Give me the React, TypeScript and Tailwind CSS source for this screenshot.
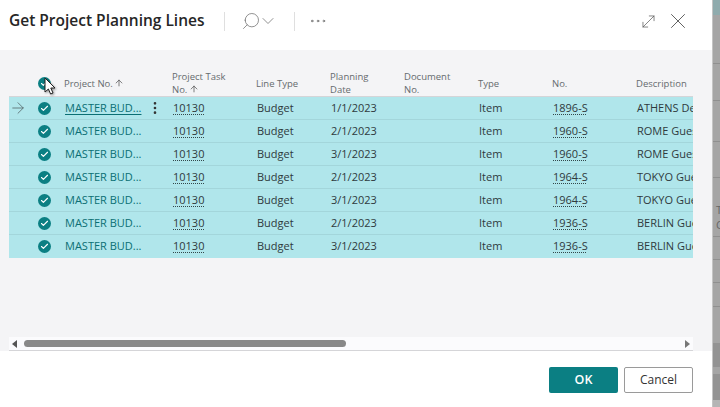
import { ArrowRight, ArrowUp, Check, ChevronDown, MoreHorizontal, MoreVertical, MoveDiagonal, Search, X } from 'lucide-react';

const rows = [
  { date: '1/1/2023', no: '1896-S', desc: 'ATHENS Desk' },
  { date: '2/1/2023', no: '1960-S', desc: 'ROME Guest' },
  { date: '3/1/2023', no: '1960-S', desc: 'ROME Guest' },
  { date: '2/1/2023', no: '1964-S', desc: 'TOKYO Guest' },
  { date: '3/1/2023', no: '1964-S', desc: 'TOKYO Guest' },
  { date: '2/1/2023', no: '1936-S', desc: 'BERLIN Guest' },
  { date: '3/1/2023', no: '1936-S', desc: 'BERLIN Guest' },
];

const grid = 'grid grid-cols-[29px_26px_108px_84px_74px_74px_74px_74px_84px_57px]';

function CheckDot() {
  return (
    <span className="flex size-[13px] items-center justify-center rounded-full bg-[#0b7f83] text-white">
      <Check className="size-[9px]" strokeWidth={3} />
    </span>
  );
}

function Dotted({ children }: { children: string }) {
  return <span className="underline decoration-dotted decoration-[#33474a] underline-offset-2">{children}</span>;
}

function SortArrow() {
  return <ArrowUp className="-ml-[1px] inline-block size-[10px] align-[-1px] text-[#555]" strokeWidth={1.8} />;
}

export default function App() {
  return (
    <div className="flex h-[407px] w-[720px] bg-white font-['Open_Sans','Noto_Sans',sans-serif] text-[11px] text-[#2f3a3d]">
      <div className="flex w-[712px] flex-col">
        <header className="flex h-[50px] shrink-0 items-center pb-[8px] pl-[9px] pr-[21px]">
          <h1 className="w-[215px] text-[15.5px] font-semibold text-[#262626]">Get Project Planning Lines</h1>
          <span className="h-[19px] w-px bg-[#dfdfdf]" />
          <div className="flex w-[69px] items-center justify-center text-[#6d6d6d]">
            <Search className="size-[20px] -scale-x-100" strokeWidth={0.9} />
            <ChevronDown className="-ml-[3px] size-[20px]" strokeWidth={0.9} />
          </div>
          <span className="h-[19px] w-px bg-[#dfdfdf]" />
          <MoreHorizontal className="ml-[13px] size-[20px] text-[#6d6d6d]" strokeWidth={1} />
          <div className="ml-auto flex items-center gap-[7px] text-[#555]">
            <MoveDiagonal className="size-[19px]" strokeWidth={0.9} />
            <X className="size-[26px]" strokeWidth={0.85} />
          </div>
        </header>

        <main className="flex h-[301px] shrink-0 flex-col bg-[#f4f4f6] pl-[9px] pr-[19px]">
          <div className={`${grid} relative h-[47px] shrink-0 items-center border-b border-[#d5d5d8] pt-[20px] text-[9.5px] leading-[13px] text-[#666b6e]`}>
            <span />
            <CheckDot />
            <span>Project No. <SortArrow /></span>
            <span>Project Task<br />No. <SortArrow /></span>
            <span>Line Type</span>
            <span>Planning<br />Date</span>
            <span>Document<br />No.</span>
            <span>Type</span>
            <span>No.</span>
            <span>Description</span>
            <svg className="absolute left-[35px] top-[27px] h-[19px] w-[13px] drop-shadow-[1px_1px_1px_rgba(0,0,0,0.4)]" viewBox="0 0 13 19">
              <path d="M1 1v14l3.4-3 2.2 5 2.4-1-2.2-5H11z" fill="#fff" stroke="#222" strokeWidth="1" strokeLinejoin="round" />
            </svg>
          </div>
          <div className="shrink-0 bg-[#b0e6eb]">
            {rows.map((row, i) => (
              <div key={i} className={`${grid} h-[23px] items-center border-b border-[#a3d6db] last:border-b-0`}>
                <span className="flex justify-start">{i === 0 && <ArrowRight className="size-[18px] text-[#4f5d60]" strokeWidth={1} />}</span>
                <CheckDot />
                <span className="flex items-center justify-between pl-[1px] pr-[9px] text-[#0b6f74]">
                  <span className={i === 0 ? 'underline underline-offset-2' : ''}>MASTER BUD...</span>
                  {i === 0 && <MoreVertical className="size-[16px] text-[#333]" strokeWidth={2} />}
                </span>
                <span className="pl-[1px]"><Dotted>10130</Dotted></span>
                <span className="pl-[1px]">Budget</span>
                <span className="pl-[1px]">{row.date}</span>
                <span />
                <span className="pl-[1px]">Item</span>
                <span className="pl-[1px]"><Dotted>{row.no}</Dotted></span>
                <span className="overflow-hidden whitespace-nowrap pl-[1px]">{row.desc}</span>
              </div>
            ))}
          </div>
          <div className="mt-auto flex h-[14px] shrink-0 items-center border-b border-[#d5d5d8] bg-[#fbfbfd] px-[3px]">
            <span className="h-0 w-0 border-y-[4px] border-r-[5px] border-y-transparent border-r-[#555]" />
            <span className="ml-[7px] h-[7px] w-[322px] rounded-full bg-[#888888]" />
            <span className="ml-auto h-0 w-0 border-y-[4px] border-l-[5px] border-y-transparent border-l-[#777]" />
          </div>
        </main>

        <footer className="flex flex-1 items-start justify-end gap-[6px] pr-[19px] pt-[16px]">
          <button className="h-[26px] w-[69px] rounded-[2px] bg-[#0b7f83] text-[12.5px] font-semibold text-white">OK</button>
          <button className="h-[26px] w-[69px] rounded-[2px] border border-[#9a9a9a] bg-white text-[12px] text-[#333]">Cancel</button>
        </footer>
      </div>

      {/* page behind the dialog, only a sliver shows */}
      <div className="flex w-[8px] flex-col overflow-hidden border-l border-[#c4c4c4] bg-[#a5a5a5]">
        <div className="h-[15px] shrink-0 bg-[#8fabad]" />
        <div className="h-[49px] shrink-0 border-b border-[#8f8f8f]" />
        <div className="h-[37px] shrink-0 border-b border-[#8f8f8f]" />
        <div className="h-[41px] shrink-0 border-b border-[#8f8f8f]" />
        <div className="h-[36px] shrink-0 border-b border-[#8f8f8f]" />
        <div className="flex h-[59px] shrink-0 flex-col justify-end whitespace-nowrap border-b border-[#8f8f8f] pb-[4px] pl-[3px] text-[11px] leading-[15px] text-[#666]">
          <span>T</span>
          <span>C</span>
        </div>
        <div className="h-[23px] shrink-0 border-b border-[#8f8f8f]" />
        <div className="h-[23px] shrink-0 border-b border-[#8f8f8f]" />
        <div className="h-[24px] shrink-0 border-b border-[#8f8f8f]" />
        <div className="h-[36px] shrink-0" />
        <div className="h-[24px] shrink-0 bg-[#939393]" />
        <div className="h-[7px] shrink-0 bg-[#a5a5a5]" />
        <div className="h-[26px] shrink-0 bg-[#939393]" />
        <div className="flex-1 bg-[#b5b5b5]" />
      </div>
    </div>
  );
}
